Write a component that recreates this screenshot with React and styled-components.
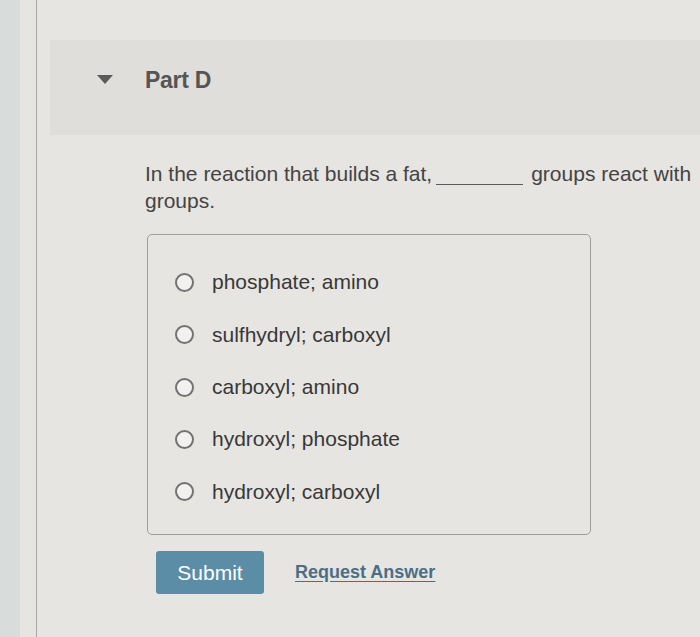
import React from "react";
import styled, { createGlobalStyle } from "styled-components";

const GlobalStyle = createGlobalStyle`
  html, body {
    margin: 0;
    padding: 0;
    background: #e7e5e2;
    overflow: hidden;
  }
  body {
    font-family: "Liberation Sans", Arial, sans-serif;
  }
`;

const App = () => {
  const options = [
    { id: 1, label: "phosphate; amino" },
    { id: 2, label: "sulfhydryl; carboxyl" },
    { id: 3, label: "carboxyl; amino" },
    { id: 4, label: "hydroxyl; phosphate" },
    { id: 5, label: "hydroxyl; carboxyl" },
  ];

  const renderOptions = () => {
    return options.map((option) => (
      <OptionStyled key={option.id}>
        <RadioStyled />
        <span>{option.label}</span>
      </OptionStyled>
    ));
  };

  return (
    <PageStyled>
      <GlobalStyle />
      <SidebarStyled />
      <MainStyled>
        <PartHeaderStyled>
          <CaretStyled />
          <h2>Part D</h2>
        </PartHeaderStyled>

        <ContentStyled>
          <QuestionStyled>
            In the reaction that builds a fat,<BlankStyled />groups react with
            groups.
          </QuestionStyled>

          <OptionsBoxStyled>{renderOptions()}</OptionsBoxStyled>

          <ActionsStyled>
            <SubmitStyled type="button">Submit</SubmitStyled>
            <LinkStyled href="#">Request Answer</LinkStyled>
          </ActionsStyled>
        </ContentStyled>
      </MainStyled>
    </PageStyled>
  );
};

const PageStyled = styled.div`
  display: flex;
  width: 700px;
  height: 637px;
  overflow: hidden;
  background: #e7e5e2;
`;

const SidebarStyled = styled.div`
  width: 20px;
  flex-shrink: 0;
  background: #d8dcdb;
`;

const MainStyled = styled.div`
  flex: 1;
  margin-left: 16px;
  border-left: 1px solid #a9a9a9;
  display: flex;
  flex-direction: column;
`;

const PartHeaderStyled = styled.div`
  margin-top: 40px;
  height: 95px;
  margin-left: 13px;
  padding-left: 47px;
  padding-bottom: 14px;
  box-sizing: border-box;
  display: flex;
  align-items: center;
  gap: 32px;
  background: #e0dedb;

  h2 {
    margin: 0;
    font-size: 23px;
    font-weight: bold;
    color: #555555;
    letter-spacing: -0.3px;
  }
`;

const CaretStyled = styled.span`
  width: 0;
  height: 0;
  border-left: 8px solid transparent;
  border-right: 8px solid transparent;
  border-top: 9px solid #5a5a5a;
  margin-bottom: 2px;
`;

const ContentStyled = styled.div`
  padding-left: 108px;
  padding-top: 25px;
`;

const QuestionStyled = styled.p`
  margin: 0;
  width: 566px;
  font-size: 21px;
  line-height: 27px;
  color: #444444;
`;

const BlankStyled = styled.span`
  display: inline-block;
  width: 87px;
  height: 1px;
  margin: 0 8px 0 4px;
  border-bottom: 1.5px solid #5a5a5a;
  vertical-align: -4px;
`;

const OptionsBoxStyled = styled.div`
  margin-top: 20px;
  margin-left: 2px;
  width: 444px;
  height: 301px;
  box-sizing: border-box;
  border: 1px solid #9e9e9e;
  border-radius: 5px;
  padding: 21px 0 16px 27px;
  display: flex;
  flex-direction: column;
`;

const OptionStyled = styled.label`
  display: flex;
  align-items: center;
  gap: 18px;
  height: 52.5px;
  font-size: 21px;
  color: #383838;
`;

const RadioStyled = styled.span`
  width: 19px;
  height: 19px;
  box-sizing: border-box;
  border: 2px solid #737373;
  border-radius: 50%;
  background: #f2f1ef;
  flex-shrink: 0;
`;

const ActionsStyled = styled.div`
  margin-top: 16px;
  margin-left: 11px;
  display: flex;
  align-items: center;
  gap: 31px;
`;

const SubmitStyled = styled.button`
  width: 108px;
  height: 43px;
  border: none;
  border-radius: 3px;
  background: #5b8da6;
  color: #ffffff;
  font-family: "Liberation Sans", Arial, sans-serif;
  font-size: 21px;
  cursor: pointer;
`;

const LinkStyled = styled.a`
  font-size: 18px;
  font-weight: bold;
  color: #4c6e84;
  text-decoration: underline;
  text-underline-offset: 3px;
`;

export default App;
